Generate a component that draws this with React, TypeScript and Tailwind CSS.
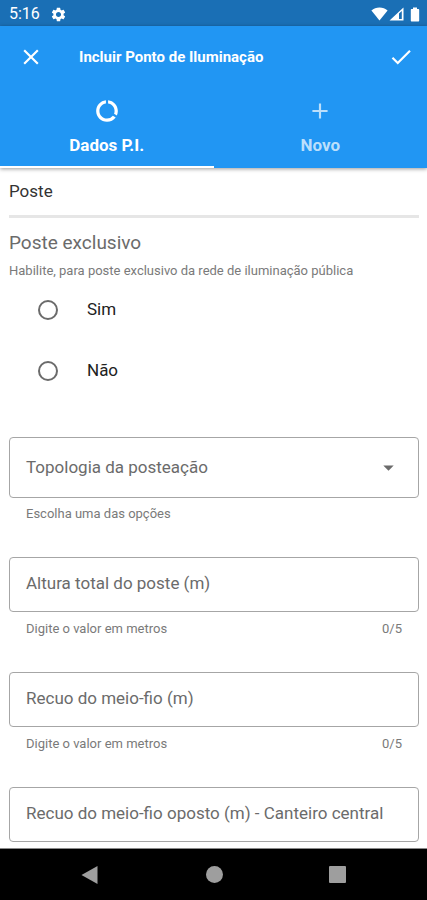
import React, {useState} from 'react';
import {
  MdAdd,
  MdArrowDropDown,
  MdCheck,
  MdClose,
  MdDataUsage,
  MdSettings,
} from 'react-icons/md';
import clsx from 'clsx';

const tabs = [
  {id: 'dados', title: 'Dados P.I.', Icon: MdDataUsage},
  {id: 'novo', title: 'Novo', Icon: MdAdd},
]

const fields = [
  {id: 'altura', label: 'Altura total do poste (m)', hint: 'Digite o valor em metros'},
  {id: 'recuo', label: 'Recuo do meio-fio (m)', hint: 'Digite o valor em metros'},
  {id: 'recuo-oposto', label: 'Recuo do meio-fio oposto (m) - Canteiro central'},
]

const StatusBar = () => (
  <div className="flex h-[26px] shrink-0 items-center justify-between bg-[#1a6fb5] pl-[9px] pr-[7px] text-white">
    <div className="flex items-center gap-[10px] pt-[2px]">
      <span className="text-[16px] leading-[24px]">5:16</span>
      <MdSettings className="size-[17px]" />
    </div>
    <div className="flex items-center pt-[2px]">
      <svg viewBox="0 0 17 14" className="h-[14px] w-[17px]" fill="currentColor">
        <path d="M8.5 13.6 0.4 3.6C2.6 1.6 5.4 0.5 8.5 0.5s5.9 1.1 8.1 3.1z" />
      </svg>
      <svg viewBox="0 0 15 14" className="ml-px h-[14px] w-[15px]" fill="currentColor">
        <path fillRule="evenodd" d="M0.5 13.5 14.5 0.5v13zM10 6.6v5.3h2.8V4z" />
      </svg>
      <svg viewBox="0 0 10 15" className="ml-[6px] h-[15px] w-[10px]" fill="currentColor">
        <path d="M3 0.5h4V2h1.2c.6 0 1 .4 1 1v10.6c0 .6-.4 1-1 1H1.8c-.6 0-1-.4-1-1V3c0-.6.4-1 1-1H3z" />
      </svg>
    </div>
  </div>
)

const Radio = ({value, label, checked, onChange}: {
  value: string
  label: string
  checked: boolean
  onChange: (value: string) => void
}) => (
  <label className="flex h-[61px] items-center gap-[29px] pl-[29px] text-[17px] text-[#212121]">
    <input
      type="radio"
      name="exclusivo"
      value={value}
      checked={checked}
      onChange={() => onChange(value)}
      className="size-[20px] appearance-none rounded-full border-2 border-[#6b6b6b] checked:border-[6px] checked:border-[#2196f3]"
    />
    {label}
  </label>
)

const TextField = ({id, label, hint}: {id: string, label: string, hint?: string}) => {
  const [value, setValue] = useState<string>('')

  return (
    <div className="h-[115px] shrink-0">
      <div className="relative">
        <input
          id={id}
          value={value}
          maxLength={5}
          inputMode="decimal"
          onChange={(e) => setValue(e.target.value)}
          className="block h-[55px] w-full rounded-[4px] border border-[#a6a6a6] bg-transparent px-4 text-[17px] outline-none focus:border-[#2196f3]"
        />
        <label
          htmlFor={id}
          className={clsx('pointer-events-none absolute left-[17px] whitespace-nowrap text-[#6b6b6b]', {
            'top-[14px] text-[17px] leading-[24px]': !value,
            '-top-2 bg-white px-1 text-[13px] leading-[16px]': value,
          })}
        >
          {label}
        </label>
      </div>
      {hint && (
        <div className="mt-[8px] flex justify-between px-[17px] text-[13px] leading-[18px] text-[#7a7a7a]">
          <span>{hint}</span>
          <span>{value.length}/5</span>
        </div>
      )}
    </div>
  )
}

const App = () => {
  const [activeTab, setActiveTab] = useState<string>('dados')
  const [exclusive, setExclusive] = useState<string>('')

  return (
    <div className="flex h-screen flex-col overflow-hidden bg-white font-['Roboto',sans-serif]">
      <StatusBar />

      <header className="z-10 shrink-0 bg-[#2196f3] text-white shadow-[0_1px_4px_rgba(0,0,0,0.4)]">
        <div className="flex h-[62px] items-center pl-[18px] pr-[13px]">
          <button type="button" aria-label="Fechar">
            <MdClose className="size-[26px]" />
          </button>
          <h1 className="ml-[35px] flex-1 text-[15px] font-bold">Incluir Ponto de Iluminação</h1>
          <button type="button" aria-label="Salvar">
            <MdCheck className="size-[26px]" />
          </button>
        </div>
        <nav className="flex" role="tablist">
          {tabs.map(({id, title, Icon}) => (
            <button
              key={id}
              type="button"
              role="tab"
              aria-selected={activeTab === id}
              onClick={() => setActiveTab(id)}
              className={clsx('flex h-[80px] flex-1 flex-col items-center border-b-2 pt-[10px]', {
                'border-white text-white': activeTab === id,
                'border-transparent text-[#bbdffb]': activeTab !== id,
              })}
            >
              <Icon className="size-[26px]" />
              <span className="mt-[9px] text-[17px] leading-[24px] font-bold">{title}</span>
            </button>
          ))}
        </nav>
      </header>

      <main className="flex min-h-0 flex-1 flex-col overflow-hidden pl-[9px] pr-[8px]">
        <h2 className="h-[50px] shrink-0 border-b-[3px] border-[#e6e6e6] pt-[11px] text-[17px] leading-[24px] text-[#333333]">
          Poste
        </h2>

        <fieldset className="mt-[13px] shrink-0">
          <legend className="text-[19px] leading-[24px] text-[#6b6b6b]">Poste exclusivo</legend>
          <p className="mt-[8px] text-[13px] leading-[16px] text-[#7a7a7a]">
            Habilite, para poste exclusivo da rede de iluminação pública
          </p>
          <Radio value="sim" label="Sim" checked={exclusive === 'sim'} onChange={setExclusive} />
          <Radio value="nao" label="Não" checked={exclusive === 'nao'} onChange={setExclusive} />
        </fieldset>

        <div className="mt-[36px] h-[120px] shrink-0">
          <div className="relative">
            <select
              id="topologia"
              className="block h-[61px] w-full appearance-none rounded-[4px] border border-[#a6a6a6] bg-transparent px-4 text-[17px] outline-none focus:border-[#2196f3]"
            >
              <option value="" />
            </select>
            <label
              htmlFor="topologia"
              className="pointer-events-none absolute inset-0 flex items-center justify-between pl-[17px] pr-[18px] text-[17px] text-[#6b6b6b]"
            >
              Topologia da posteação
              <MdArrowDropDown className="size-[25px]" />
            </label>
          </div>
          <p className="mt-[7px] px-[17px] text-[13px] leading-[18px] text-[#7a7a7a]">Escolha uma das opções</p>
        </div>

        {fields.map(field => <TextField key={field.id} {...field} />)}
      </main>

      <footer className="flex h-[52px] shrink-0 items-center justify-between border-t border-[#8a8a8a] bg-black px-[81px] text-[#9e9e9e]">
        <button type="button" aria-label="Voltar">
          <svg viewBox="0 0 18 20" className="h-[20px] w-[18px]" fill="currentColor">
            <path d="M0.5 10 16.5 1v18z" />
          </svg>
        </button>
        <button type="button" aria-label="Início" className="size-[17px] rounded-full bg-[#9e9e9e]" />
        <button type="button" aria-label="Recentes" className="size-[17px] rounded-[1px] bg-[#9e9e9e]" />
      </footer>
    </div>
  );
};

export default App;
